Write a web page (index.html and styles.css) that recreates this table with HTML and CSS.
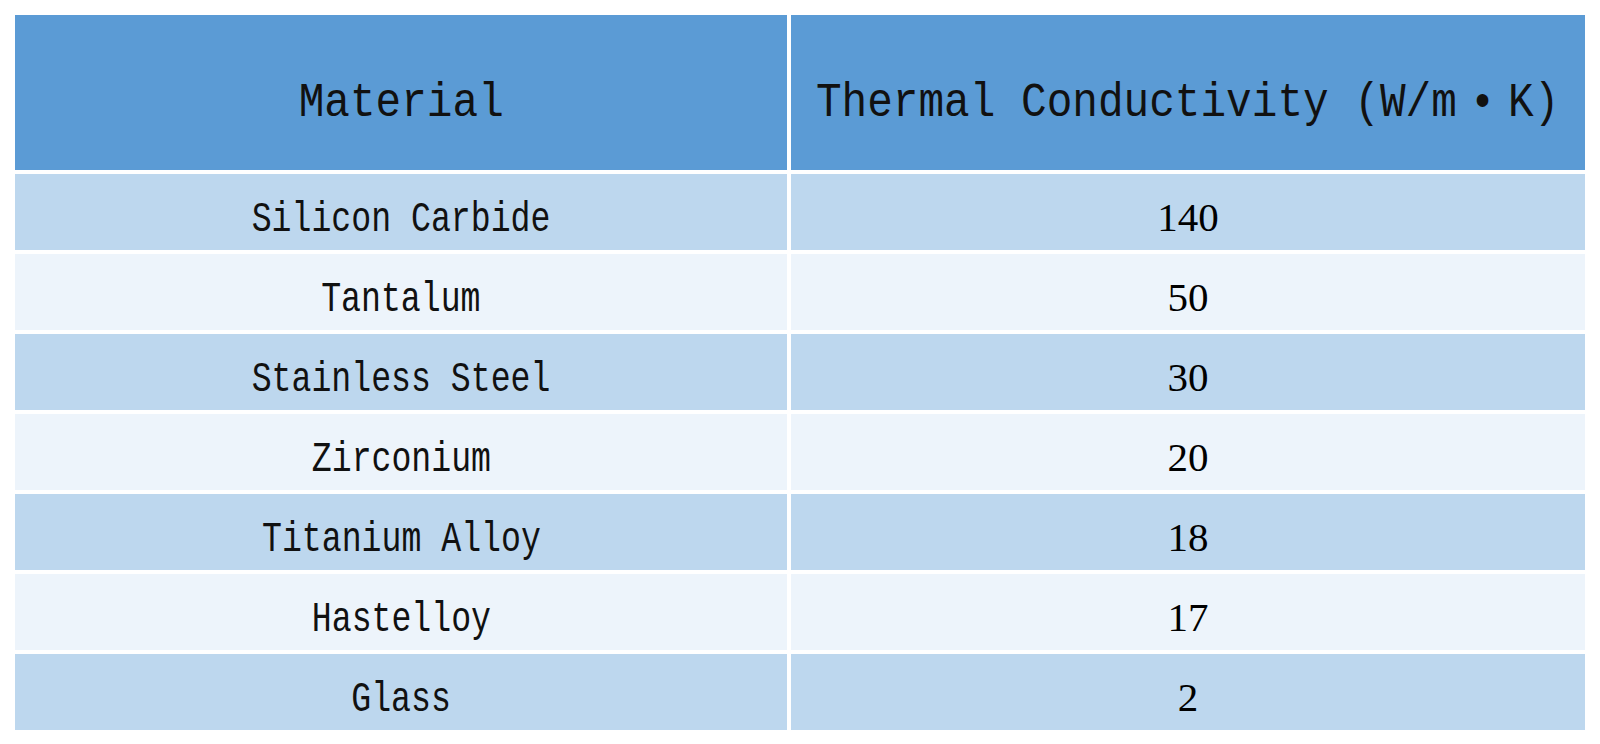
FILE: index.html
```html
<!DOCTYPE html>
<html lang="en">
<head>
<meta charset="utf-8">
<title>Thermal Conductivity</title>
<link rel="stylesheet" href="styles.css">
</head>
<body>
<div class="table">
  <div class="cell hd"><span class="mono mono-hd">Material</span></div>
  <div class="cell hd"><span class="mono mono-hd">Thermal Conductivity (W/m<span class="dot">•</span>K)</span></div>

  <div class="cell odd txt"><span class="mono">Silicon Carbide</span></div>
  <div class="cell odd num">140</div>

  <div class="cell even txt"><span class="mono">Tantalum</span></div>
  <div class="cell even num">50</div>

  <div class="cell odd txt"><span class="mono">Stainless Steel</span></div>
  <div class="cell odd num">30</div>

  <div class="cell even txt"><span class="mono">Zirconium</span></div>
  <div class="cell even num">20</div>

  <div class="cell odd txt"><span class="mono">Titanium Alloy</span></div>
  <div class="cell odd num">18</div>

  <div class="cell even txt"><span class="mono">Hastelloy</span></div>
  <div class="cell even num">17</div>

  <div class="cell odd txt"><span class="mono">Glass</span></div>
  <div class="cell odd num">2</div>
</div>
</body>
</html>
```

FILE: styles.css
```css
html, body {
  margin: 0;
  padding: 0;
  background: #ffffff;
}

.table {
  display: grid;
  grid-template-columns: 772px 794px;
  grid-template-rows: 155px repeat(7, 76px);
  gap: 4px;
  margin: 15px 0 0 15px;
}

.cell {
  display: flex;
  align-items: center;
  justify-content: center;
  color: #000000;
  line-height: 1;
  white-space: nowrap;
  box-sizing: border-box;
}

.hd {
  background: #5b9bd5;
  padding-top: 20px;
}

.odd {
  background: #bdd7ee;
}

.even {
  background: #edf4fb;
}

.txt {
  padding-top: 15px;
}

.mono {
  display: inline-block;
  font-family: "Liberation Mono", "DejaVu Sans Mono", monospace;
  font-size: 42px;
  transform: scaleX(0.79);
  transform-origin: center;
  color: #111111;
}

.mono-hd {
  font-size: 48px;
  transform: scaleX(0.89);
}

.dot {
  padding: 0 0.3em;
}

.num {
  font-family: "Liberation Serif", "Times New Roman", serif;
  font-size: 41px;
  padding-top: 10px;
}
```
